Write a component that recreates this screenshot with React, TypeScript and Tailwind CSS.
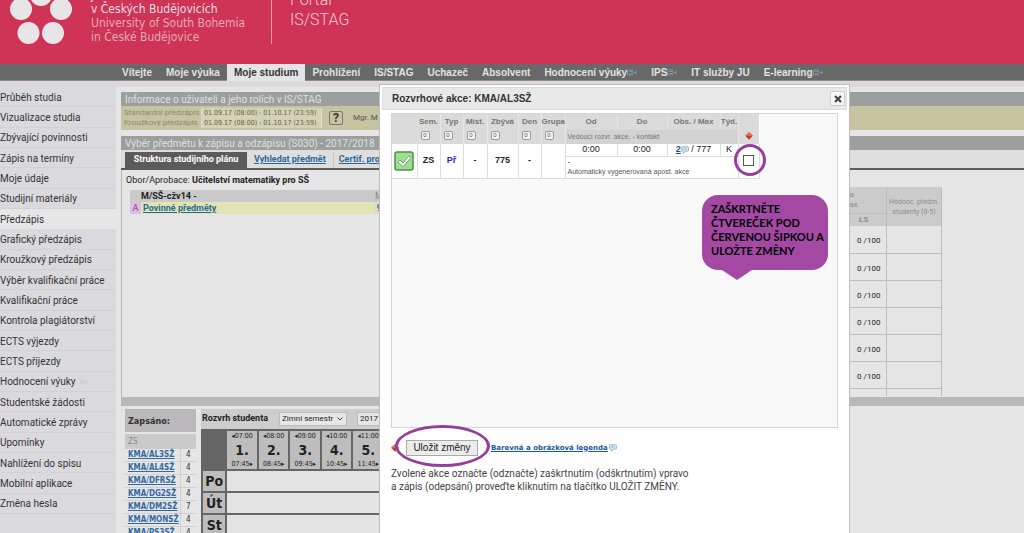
import type { ReactNode } from "react";

const dejavu = "font-['DejaVu_Sans_Condensed','DejaVu_Sans',sans-serif]";
const roboto = "font-['Roboto',sans-serif]";
const arial = "font-['Liberation_Sans',sans-serif]";

const navItems = [
  { label: "Vítejte" },
  { label: "Moje výuka" },
  { label: "Moje studium", active: true },
  { label: "Prohlížení" },
  { label: "IS/STAG" },
  { label: "Uchazeč" },
  { label: "Absolvent" },
  { label: "Hodnocení výuky", external: true },
  { label: "IPS", external: true },
  { label: "IT služby JU" },
  { label: "E-learning", external: true },
];

const sideItems = [
  "Průběh studia",
  "Vizualizace studia",
  "Zbývající povinnosti",
  "Zápis na termíny",
  "Moje údaje",
  "Studijní materiály",
  "Předzápis",
  "Grafický předzápis",
  "Kroužkový předzápis",
  "Výběr kvalifikační práce",
  "Kvalifikační práce",
  "Kontrola plagiátorství",
  "ECTS výjezdy",
  "ECTS příjezdy",
  "Hodnocení výuky",
  "Studentské žádosti",
  "Automatické zprávy",
  "Upomínky",
  "Nahlížení do spisu",
  "Mobilní aplikace",
  "Změna hesla",
];

const enrolled: [string, number][] = [
  ["KMA/AL3SŽ", 4],
  ["KMA/AL4SŽ", 4],
  ["KMA/DFRSŽ", 4],
  ["KMA/DG2SŽ", 4],
  ["KMA/DM2SŽ", 7],
  ["KMA/MONSŽ", 4],
  ["KMA/PS3SŽ", 4],
];

const hours = [
  ["07:00", "1.", "07:45"],
  ["08:00", "2.", "08:45"],
  ["09:00", "3.", "09:45"],
  ["10:00", "4.", "10:45"],
  ["11:00", "5.", "11:45"],
];

function ExternalIcon({ className }: { className: string }) {
  return (
    <svg viewBox="0 0 10 7" className={className} fill="none" stroke="currentColor" aria-hidden="true">
      <path d="M6 1H.5v5H6M2 2.5h4M2 4.5h4M6 3.5h3.5M8 1.5l1.8 2L8 5.5" strokeWidth=".9" />
    </svg>
  );
}

function BubbleIcon({ className }: { className: string }) {
  return (
    <svg viewBox="0 0 9 9" className={className} aria-hidden="true">
      <path d="M1.5.8h6q1 0 1 1v3q0 1-1 1H5L2.5 8.2V5.8h-1q-1 0-1-1v-3q0-1 1-1z" fill="#dbe8f5" stroke="#7f9fc4" strokeWidth=".8" />
      <path d="M2 2.5h5M2 4h4" stroke="#8fadd0" strokeWidth=".6" />
    </svg>
  );
}

function RedArrows({ className }: { className: string }) {
  return (
    <svg viewBox="0 0 8 8" className={className} aria-hidden="true">
      <path d="M4 .2 7.800 3.800 4 7.800.2 3.800z" fill="#cf3a24" />
      <path d="M4 .2 7.800 3.800H.2z" fill="#e8704f" />
    </svg>
  );
}

function Header() {
  return (
    <header className="flex h-16 items-end overflow-hidden bg-[#cf3355]">
      <svg viewBox="0 0 80 64" className="h-16 w-20 shrink-0" aria-hidden="true">
        <g fill="#e8e5e6">
          <circle cx="41" cy="-5" r="11" />
          <circle cx="21" cy="9" r="11" />
          <circle cx="61" cy="9" r="11" />
          <circle cx="28.500" cy="33" r="11" />
          <circle cx="53" cy="33" r="11" />
        </g>
      </svg>
      <div className={`ml-[11px] w-[180px] pb-5 text-[12px] leading-[14px] whitespace-nowrap text-[#e9a9b7] ${dejavu}`}>
        <p className="text-[#ecdfe2]">Jihočeská univerzita</p>
        <p className="text-[#ecdfe2]">v Českých Budějovicích</p>
        <p>University of South Bohemia</p>
        <p>in České Budějovice</p>
      </div>
      <div className="mb-5 h-16 border-l border-[#dfa0ae]" />
      <div className={`ml-[18px] pb-[34px] text-[16px] leading-5 font-light text-[#f0cdd5] ${roboto}`}>
        <p>Portál</p>
        <p>IS/STAG</p>
      </div>
    </header>
  );
}

function Nav() {
  return (
    <nav className={`flex h-[17px] items-stretch border-b border-[#97878b] bg-[#676867] pl-[115px] text-[10px] font-bold whitespace-nowrap text-[#e2e2e2] ${arial}`}>
      {navItems.map((item) => (
        <a
          key={item.label}
          href="#"
          className={item.active ? "-mb-px flex items-center bg-[#e4e4e4] px-[7px] text-[#333]" : "flex items-center px-[7px]"}
        >
          {item.label}
          {item.external && <ExternalIcon className="h-[7px] w-[10px] text-[#7f9cb0]" />}
        </a>
      ))}
    </nav>
  );
}

function Sidebar() {
  return (
    <aside className="w-[116px] shrink-0 bg-[#dadade]">
      <ul className={`grid h-[427px] auto-rows-fr text-[10px] whitespace-nowrap text-[#333] ${roboto}`}>
        {sideItems.map((label) => (
          <li key={label} className={label === "Předzápis" ? "-mr-1 flex bg-[#e6e6e6] pt-px" : "flex border-b border-[#d2d2d6] pt-px"}>
            <a href="#" className="flex flex-1 items-center">
              {label}
              {label === "Hodnocení výuky" && <ExternalIcon className="ml-1 h-[6px] w-2 text-[#cbcbd0]" />}
            </a>
          </li>
        ))}
      </ul>
    </aside>
  );
}

function Bar({ children }: { children: ReactNode }) {
  return <h2 className="h-[14px] bg-[#9b9f9d] pl-1 text-[10px] leading-[15px] whitespace-nowrap text-[#e0e0e0]">{children}</h2>;
}

function CapacityTable() {
  return (
    <table className="mt-[17px] mr-[82px] h-[209px] w-[92px] table-fixed border-collapse text-[8px] text-[#222]">
      <colgroup>
        <col className="w-[37px]" />
        <col className="w-[55px]" />
      </colgroup>
      <thead className="bg-[#cbcbcb] text-[#8c8c8c]">
        <tr className="h-[26px]">
          <th className="border-r border-b border-[#bbb] p-0 text-left leading-[10px] font-normal">a<br />ax</th>
          <th rowSpan={2} className="border-r border-[#bbb] p-0 text-[7px] leading-[10px] font-normal whitespace-nowrap">Hodnoc. předm.<br />studenty (0-5)</th>
        </tr>
        <tr className="h-[13px]">
          <th className="border-r border-[#bbb] p-0 pr-2 leading-[10px]">LS</th>
        </tr>
      </thead>
      <tbody>
        {[1, 2, 3, 4, 5, 6].map((n) => (
          <tr key={n} className="h-[27px]">
            <td className="border-r border-b border-[#bebebe] p-0 pt-1 pl-0.5 text-center">0 /100</td>
            <td className="border-r border-b border-[#bebebe]" />
          </tr>
        ))}
        <tr>
          <td className="border-r border-[#bebebe]" />
          <td className="border-r border-[#bebebe]" />
        </tr>
      </tbody>
    </table>
  );
}

function PlanPanel() {
  return (
    <section className="flex h-[227px] justify-between border-l border-[#b5b5b5] pl-1">
      <div className="min-w-0 flex-1 pt-[3px]">
        <p className="h-[17px] text-[9px] leading-[14px] whitespace-nowrap text-[#222]">
          Obor/Aprobace: <b>Učitelství matematiky pro SŠ</b>
        </p>
        <table className="ml-1 w-[290px] table-fixed border-collapse text-[9px] leading-3 text-[#222]">
          <colgroup>
            <col className="w-[11px]" />
            <col className="w-[234px]" />
            <col />
          </colgroup>
          <tbody>
            <tr className="bg-[#c9c9c9]">
              <td />
              <td className="py-0 font-bold">M/SŠ-cžv14 -</td>
              <td className="p-0 text-[#888]">M</td>
            </tr>
            <tr className="bg-[#e4e3b3]">
              <td className="bg-[#d9bfe0] p-0 text-center text-[#8b3b9c]">A</td>
              <td className="p-0 pl-0.5 font-bold">
                <a href="#" className="text-[#1d6d94] underline">Povinné předměty</a>
              </td>
              <td className="bg-[#d8d8d8] p-0 pl-0.5">9</td>
            </tr>
          </tbody>
        </table>
      </div>
      <CapacityTable />
    </section>
  );
}

function Enrolled() {
  return (
    <div className={`w-[71px] shrink-0 ${dejavu}`}>
      <h3 className="h-[23px] bg-[#bab8ba] pl-[3px] text-[9px] leading-[24px] font-bold text-[#333]">Zapsáno:</h3>
      <p className="mt-0.5 h-[15px] bg-[#cacaca] pl-[3px] text-[8px] leading-4 text-[#888]">ZS</p>
      <table className="h-[91px] w-full table-fixed border-collapse text-[8px] leading-[11px] text-[#333]">
        <colgroup>
          <col className="w-[55px]" />
          <col />
        </colgroup>
        <tbody>
          {enrolled.map(([code, credits]) => (
            <tr key={code} className="border-b border-[#cfcfcf]">
              <td className="border-r border-[#cfcfcf] p-0 pl-[3px] font-bold whitespace-nowrap">
                <a href="#" className="text-[#3369a0] underline">{code}</a>
              </td>
              <td className="p-0 text-center">{credits}</td>
            </tr>
          ))}
        </tbody>
      </table>
    </div>
  );
}

function Timetable() {
  return (
    <div className="min-w-0 flex-1 overflow-hidden">
      <div className="flex h-5 w-[180px] items-center overflow-hidden bg-[#cdcdcd] text-[9px] whitespace-nowrap text-[#222]">
        <label htmlFor="semester" className="w-[78px] shrink-0 pl-px font-bold">Rozvrh studenta</label>
        <div className="relative shrink-0">
          <select id="semester" className="block h-[14px] w-[68px] appearance-none border border-[#bbb] bg-[#e6e6e6] pl-0.5 text-[8px] leading-3">
            <option>Zimní semestr</option>
          </select>
          <svg viewBox="0 0 6 4" className="pointer-events-none absolute top-[5px] right-1 h-1 w-1.5" fill="none" stroke="#444" aria-hidden="true">
            <path d="m.5.5 2.500 2.500L5.500.5" />
          </svg>
        </div>
        <select aria-label="Rok" className="ml-[10px] h-[14px] w-12 shrink-0 appearance-none border border-[#bbb] bg-[#e6e6e6] pl-0.5 text-[8px] leading-3">
          <option>2017</option>
        </select>
      </div>
      <table className={`w-[184px] table-fixed border-separate border-spacing-x-[2px] border-spacing-y-[2px] bg-[#666] text-[#222] ${dejavu}`}>
        <colgroup>
          <col className="w-[22px]" />
          {hours.map((h) => (
            <col key={h[1]} className="w-[29px]" />
          ))}
        </colgroup>
        <thead>
          <tr className="h-[38px]">
            <td />
            {hours.map(([from, n, to]) => (
              <th key={n} className="bg-[#bdbdbd] p-0 text-center align-middle text-[7px] leading-[10px] font-normal whitespace-nowrap">
                ◂{from}
                <div className="py-0.5 text-[14px] leading-[14px] font-bold">{n}</div>
                {to}▸
              </th>
            ))}
          </tr>
        </thead>
        <tbody>
          {["Po", "Út", "St"].map((day) => (
            <tr key={day} className="h-5">
              <th className="bg-[#bdbdbd] p-0 text-center text-[14px] leading-5">{day}</th>
              <td colSpan={5} className="bg-[#e3e3e3]" />
            </tr>
          ))}
        </tbody>
      </table>
    </div>
  );
}

function Main() {
  return (
    <main className={`min-w-0 flex-1 pt-[5px] pl-[5px] ${roboto}`}>
      <Bar>Informace o uživateli a jeho rolích v IS/STAG</Bar>
      <div className="flex h-6 items-center bg-[#c5c3a0] text-[8px] leading-[10px] whitespace-nowrap text-[#8b8a70]">
        <div className="w-[80px] pl-[3px]">
          <p>Standardní předzápis</p>
          <p>Kroužkový předzápis</p>
        </div>
        <div className={`w-[121px] border-x border-[#e0dfc8] bg-[#d3d2b4] pl-0.5 text-[7px] text-[#626150] ${dejavu}`}>
          <p>01.09.17 (08:00) - 01.10.17 (23:59)</p>
          <p>01.09.17 (08:00) - 01.10.17 (23:59)</p>
        </div>
        <button type="button" className="ml-[7px] h-[14px] w-[14px] shrink-0 rounded-xs border border-[#777] text-[12px] leading-3 font-bold text-[#333]">?</button>
        <span className="ml-[10px] text-[#555]">Mgr. M</span>
      </div>
      <div className="pt-1.5">
        <Bar>Výběr předmětu k zápisu a odzápisu (S030) - 2017/2018</Bar>
      </div>
      <div className="flex h-5 items-stretch border-b-2 border-[#5b5b5b] bg-[#dedede] pt-0.5 pl-1 text-[9px] font-bold whitespace-nowrap text-[#2f6798]">
        <a href="#" className="flex w-[122px] items-center justify-center bg-[#5b5b5b] text-white">Struktura studijního plánu</a>
        <a href="#" className="flex items-center border-r border-[#ccc] px-[7px] underline">Vyhledat předmět</a>
        <a href="#" className="flex items-center px-[5px] underline">Certif. programy</a>
      </div>
      <PlanPanel />
      <div className="h-[9px] bg-[#b8b8b8]" />
      <div className="flex gap-[5px] pt-[3px] pl-1">
        <Enrolled />
        <Timetable />
      </div>
    </main>
  );
}

function SortBox() {
  return <button type="button" aria-label="Seřadit" className="block h-[9px] w-[9px] rounded-xs border border-[#999] bg-[#f2f2f2] text-[6px] leading-[7px] text-[#555]">0</button>;
}

function EventsTable() {
  const cell = "border-r border-[#ddd] p-0 text-center";
  return (
    <table className="w-[367px] table-fixed border-collapse border-b border-[#ddd] bg-white text-[9px] text-[#222]">
      <colgroup>
        <col className="w-[25px]" />
        <col className="w-[23px]" />
        <col className="w-[23px]" />
        <col className="w-[24px]" />
        <col className="w-[31px]" />
        <col className="w-[23px]" />
        <col className="w-[24px]" />
        <col className="w-[52px]" />
        <col className="w-[50px]" />
        <col className="w-[53px]" />
        <col className="w-[18px]" />
        <col className="w-[21px]" />
      </colgroup>
      <thead className="bg-[#dadada] text-[8px] whitespace-nowrap text-[#777]">
        <tr className="h-4">
          <th rowSpan={2} className={cell} />
          {["Sem.", "Typ", "Míst.", "Zbývá", "Den", "Grupa", "Od", "Do", "Obs. / Max", "Týd."].map((label) => (
            <th key={label} className="border-r border-[#e6e6e6] p-0 text-center">{label}</th>
          ))}
          <th rowSpan={2} className="p-0 pb-1 align-bottom">
            <RedArrows className="mx-auto h-2 w-2" />
          </th>
        </tr>
        <tr className="h-[14px]">
          {[1, 2, 3, 4, 5, 6].map((n) => (
            <td key={n} className="border-r border-[#e6e6e6] p-0 pt-px pl-[3px] align-top">
              <SortBox />
            </td>
          ))}
          <td colSpan={4} className="border-r border-[#e6e6e6] bg-[#d2d2d2] p-0 pl-0.5 text-[7px]">Vedoucí rozvr. akce. - kontakt</td>
        </tr>
      </thead>
      <tbody>
        <tr className="h-3">
          <td rowSpan={3} className={cell}>
            <svg viewBox="0 0 20 20" className="mx-auto size-5" role="img" aria-label="Zapsáno">
              <rect x="1" y="1" width="18" height="18" rx="2" fill="#9be08f" stroke="#4f8f4c" strokeWidth="1.500" />
              <path d="m4 11 2-2 3 3 6-7 2 1.500-8 9z" fill="#fff" stroke="#6a8a68" strokeWidth=".8" />
            </svg>
          </td>
          <td rowSpan={3} className={`${cell} font-bold`}>ZS</td>
          <td rowSpan={3} className={`${cell} font-bold text-[#2a22d8]`}>Př</td>
          <td rowSpan={3} className={`${cell} font-bold`}>-</td>
          <td rowSpan={3} className={`${cell} font-bold`}>775</td>
          <td rowSpan={3} className={`${cell} font-bold`}>-</td>
          <td rowSpan={3} className={cell} />
          <td className={`${cell} border-b leading-[11px]`}>0:00</td>
          <td className={`${cell} border-b leading-[11px]`}>0:00</td>
          <td className={`${cell} border-b leading-[11px] whitespace-nowrap`}>
            <a href="#" className="font-bold text-[#1e4f9c] underline">2</a>
            <BubbleIcon className="inline size-2 align-middle" /> / 777
          </td>
          <td className={`${cell} border-b leading-[11px]`}>K</td>
          <td rowSpan={3} className="border-r border-[#ddd] p-0">
            <input type="checkbox" aria-label="Vybrat akci" className="mx-auto block size-[11px] appearance-none border border-[#555] bg-white" />
          </td>
        </tr>
        <tr className="h-[11px]">
          <td colSpan={4} className="border-r border-[#ddd] p-0 pl-0.5 text-[8px] leading-[10px]">-</td>
        </tr>
        <tr className="h-[11px]">
          <td colSpan={4} className="border-r border-[#ddd] p-0 pl-0.5 text-[7px] leading-[10px] text-[#555]">Automaticky vygenerovaná apost. akce</td>
        </tr>
      </tbody>
    </table>
  );
}

function Dialog() {
  return (
    <div role="dialog" aria-labelledby="dialog-title" className={`absolute top-[84px] bottom-0 left-[379px] w-[471px] border-x border-t border-[#bdbdbd] bg-white p-[2px] ${arial}`}>
      <div className="flex h-[23px] items-center justify-between border border-[#ddd] bg-[#e8e8e8] pr-px pl-[9px]">
        <h2 id="dialog-title" className="text-[10px] font-bold text-[#333]">Rozvrhové akce: KMA/AL3SŽ</h2>
        <button type="button" aria-label="Zavřít" className="flex size-[15px] items-center justify-center rounded-xs border border-[#ccc] bg-[#f7f7f7]">
          <svg viewBox="0 0 8 8" className="size-2" aria-hidden="true">
            <path d="m1 1 6 6M7 1 1 7" stroke="#444" strokeWidth="2.200" />
          </svg>
        </button>
      </div>
      <div className="mx-[9px] mt-[3px] h-[315px] border border-[#d5d5d5] bg-[#f8f8f8]">
        <EventsTable />
      </div>
      <div className="flex items-center pt-3 pl-[9px]">
        <RedArrows className="h-2 w-2" />
        <button type="button" className="ml-[7px] h-4 w-[72px] border border-[#aaa] bg-[#ececec] text-[10px] leading-[14px] whitespace-nowrap text-[#222]">Uložit změny</button>
        <a href="#" className="ml-[13px] font-['DejaVu_Sans',sans-serif] text-[7px] font-bold whitespace-nowrap text-[#1758a5] underline">Barevná a obrázková legenda</a>
        <BubbleIcon className="ml-px size-2" />
      </div>
      <p className={`pt-[11px] pl-[9px] text-[10px] leading-[13px] whitespace-nowrap text-[#444] ${roboto}`}>
        Zvolené akce označte (odznačte) zaškrtnutím (odškrtnutím) vpravo
        <br />a zápis (odepsání) proveďte kliknutím na tlačítko ULOŽIT ZMĚNY.
      </p>
    </div>
  );
}

function Annotations() {
  return (
    <>
      <div className="pointer-events-none absolute top-[425px] left-[395px] h-[42px] w-[95px] rounded-[50%] border-3 border-[#943f9a]" />
      <div className="pointer-events-none absolute top-[144px] left-[734px] size-8 rounded-full border-3 border-[#943f9a]" />
      <div className="absolute top-[195px] left-[702px] w-[126px]">
        <div className="h-[75px] rounded-[16px] bg-[#a349a4] pt-[7px] pl-[9px] font-['Lato',sans-serif] text-[11px] leading-[14px] font-bold whitespace-nowrap text-black">
          ZAŠKRTNĚTE
          <br />
          ČTVEREČEK POD
          <br />
          ČERVENOU ŠIPKOU A
          <br />
          ULOŽTE ZMĚNY
        </div>
        <svg viewBox="0 0 30 10" className="ml-5 block h-[10px] w-[30px]" aria-hidden="true">
          <path d="M0 0h30L15 10z" fill="#a349a4" />
        </svg>
      </div>
    </>
  );
}

export default function App() {
  return (
    <div className="relative flex h-screen flex-col overflow-hidden bg-[#e5e5e5]">
      <Header />
      <Nav />
      <div className="h-1.5 shrink-0 bg-[#dadade]" />
      <div className="flex min-h-0 flex-1">
        <Sidebar />
        <Main />
      </div>
      <Dialog />
      <Annotations />
    </div>
  );
}
